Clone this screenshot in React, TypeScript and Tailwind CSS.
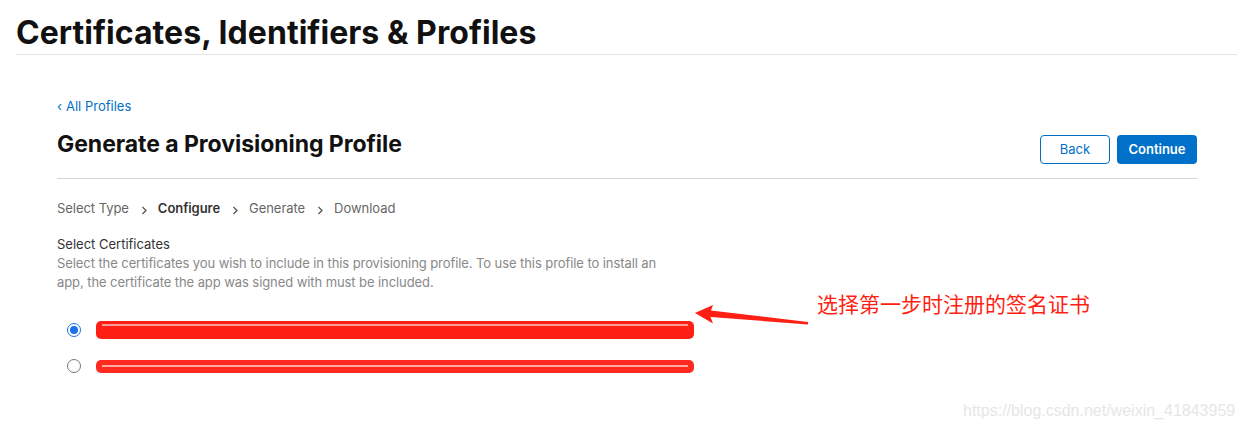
import React from "react";

function Chevron() {
  return (
    <svg width="7" height="9" viewBox="0 0 7 9" className="mt-[5px] ml-[12px] mr-[10px]" aria-hidden>
      <path d="M1.5 1 L5 4.5 L1.5 8" fill="none" stroke="#555" strokeWidth="1.3" />
    </svg>
  );
}

export default function App() {
  return (
    <div className="relative w-[1244px] h-[430px] bg-white overflow-hidden font-['Inter','Liberation_Sans',sans-serif]">
      <header className="ml-[16px] mr-[7px] border-b border-[#e3e3e3] pt-[15px] pb-[3px]">
        <h1 className="text-[32px] leading-[36px] font-bold text-[#111] tracking-[0.05px]">
          Certificates, Identifiers &amp; Profiles
        </h1>
      </header>

      <main className="ml-[57px] w-[1140px]">
        <div className="mt-[42px] flex items-center text-[13px] leading-[18px] text-[#0070c9]">
          <span className="mr-[4px] text-[13px]">‹</span>
          <span>All Profiles</span>
        </div>

        <div className="mt-[16px] flex items-start justify-between border-b border-[#d6d6d6] pb-[14px]">
          <h2 className="text-[23px] leading-[28px] font-bold text-[#111] mt-[-1px] tracking-[-0.05px]">
            Generate a Provisioning Profile
          </h2>
          <div className="flex gap-[7px] mt-[4px]">
            <button className="w-[70px] h-[29px] rounded-[4px] border border-[#0070c9] text-[13px] text-[#0070c9] bg-white">
              Back
            </button>
            <button className="w-[80px] h-[29px] rounded-[4px] bg-[#0070c9] text-[13px] font-semibold text-white">
              Continue
            </button>
          </div>
        </div>

        <div className="mt-[20px] flex items-center text-[13px] leading-[18px] text-[#666] tracking-[-0.05px]">
          <span>Select Type</span>
          <Chevron />
          <span className="font-semibold text-[#333]">Configure</span>
          <Chevron />
          <span>Generate</span>
          <Chevron />
          <span>Download</span>
        </div>

        <div className="mt-[18px] text-[13px] leading-[19px] text-[#333]">Select Certificates</div>
        <p className="w-[610px] text-[13px] leading-[19px] text-[#888] tracking-[-0.08px]">
          Select the certificates you wish to include in this provisioning profile. To use this profile to install an
          app, the certificate the app was signed with must be included.
        </p>

        <div className="mt-[29px] flex items-center">
          <div className="ml-[10px] w-[14px] h-[14px] rounded-full border border-[#1a73e8] bg-white flex items-center justify-center">
            <div className="w-[8px] h-[8px] rounded-full bg-[#1a73e8]" />
          </div>
          <div className="ml-[15px] w-[598px] h-[18px] rounded-[5px] bg-[#ff1f14] flex items-start pt-[3px] px-[6px]">
            <div className="w-full h-[2px] bg-[#ffd0cc] opacity-70" />
          </div>
        </div>

        <div className="mt-[20px] flex items-center">
          <div className="ml-[10px] w-[14px] h-[14px] rounded-full border border-[#777] bg-white" />
          <div className="ml-[15px] w-[598px] h-[13px] rounded-[5px] bg-[#ff2a20] flex items-center px-[6px]">
            <div className="w-full h-[2px] bg-[#ffc8c2] opacity-80" />
          </div>
        </div>
      </main>

      <svg className="absolute left-[690px] top-[300px]" width="125" height="30" viewBox="690 300 125 30">
        <polygon
          points="695,313 713,305 711,310.5 808,322 808,324.5 710.5,317 713,323.5"
          fill="#ff1f14"
        />
      </svg>

      <div className="absolute left-[817px] top-[290px] text-[21px] leading-[26px] text-[#ff1f14] font-['Noto_Sans_CJK_SC',sans-serif]">
        选择第一步时注册的签名证书
      </div>

      <div className="absolute left-[963px] top-[401px] text-[16px] leading-[19px] text-[#e6e6e6] font-['Liberation_Sans',sans-serif]">
        https://blog.csdn.net/weixin_41843959
      </div>
    </div>
  );
}
